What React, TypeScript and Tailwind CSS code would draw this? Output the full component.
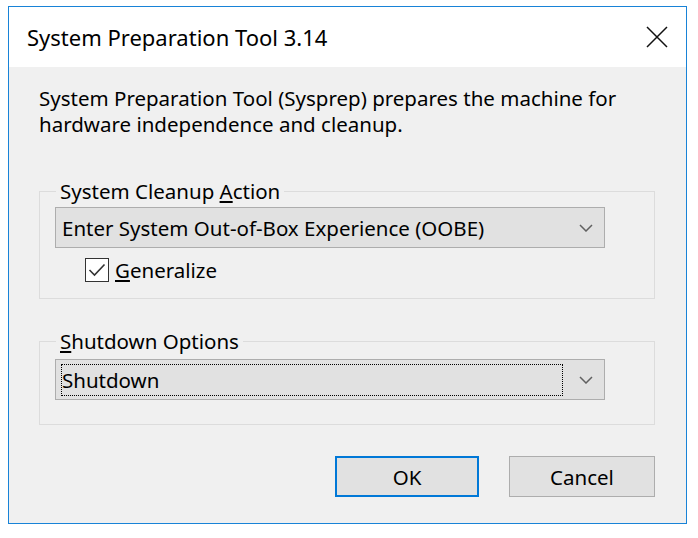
import React from "react";

const font = { fontFamily: '"Noto Sans", "Open Sans", sans-serif' };

const Chevron = () => (
  <svg width="14" height="8" viewBox="0 0 14 8" fill="none">
    <path d="M1 1l6 6 6-6" stroke="#606060" strokeWidth="1.5" />
  </svg>
);

const Combo = ({ children, focused }: { children: React.ReactNode; focused?: boolean }) => (
  <div className="flex h-[41px] w-[550px] items-center border border-[#adadad] bg-[#e1e1e1] pr-[11px]">
    {focused ? (
      <div className="ml-[5px] mr-[16px] flex h-[32px] flex-1 items-center border border-dotted border-black">
        <span>{children}</span>
      </div>
    ) : (
      <span className="ml-[6px] flex-1">{children}</span>
    )}
    <Chevron />
  </div>
);

export default function App() {
  return (
    <div className="h-[538px] w-[698px] bg-white pl-[8px] pt-[6px] text-[20.5px] leading-[26px] text-black" style={font}>
      <div className="flex h-[518px] w-[679px] flex-col border border-[#1883d7]">
        <div className="flex h-[60px] items-center justify-between bg-white pl-[18px] pr-[18px]">
          <span className="text-[22px]">System Preparation Tool 3.14</span>
          <svg width="22" height="22" viewBox="0 0 22 22" fill="none">
            <path d="M1 1l20 20M21 1L1 21" stroke="#111" strokeWidth="1.5" />
          </svg>
        </div>
        <div className="flex flex-1 flex-col bg-[#f0f0f0] pl-[30px] pr-[30px] pt-[18px]">
          <p>
            System Preparation Tool (Sysprep) prepares the machine for
            <br />
            hardware independence and cleanup.
          </p>

          <fieldset className="mt-[42px] w-[616px] border border-[#dcdcdc] pb-[15px] pl-[15px]">
            <legend className="ml-[1px] px-[4px] leading-[24px]">
              System Cleanup <span className="underline">A</span>ction
            </legend>
            <div className="mt-[4px]">
              <Combo>Enter System Out-of-Box Experience (OOBE)</Combo>
            </div>
            <label className="mt-[9px] flex items-center pl-[30px]">
              <span className="flex h-[24px] w-[24px] items-center justify-center border-[1.5px] border-[#333] bg-white">
                <svg width="18" height="14" viewBox="0 0 18 14" fill="none">
                  <path d="M1.5 7l5 5L16.5 1.5" stroke="#333" strokeWidth="1.6" />
                </svg>
              </span>
              <span className="ml-[6px]">
                <span className="underline">G</span>eneralize
              </span>
            </label>
          </fieldset>

          <fieldset className="mt-[30px] w-[616px] border border-[#dcdcdc] pb-[24px] pl-[15px]">
            <legend className="ml-[1px] px-[4px] leading-[24px]">
              <span className="underline">S</span>hutdown Options
            </legend>
            <div className="mt-[6px]">
              <Combo focused>Shutdown</Combo>
            </div>
          </fieldset>

          <div className="mt-[31px] flex justify-end gap-[30px] pr-[1px]">
            <button className="h-[41px] w-[144px] border-2 border-[#0078d7] bg-[#e1e1e1]">OK</button>
            <button className="h-[41px] w-[146px] border border-[#adadad] bg-[#e1e1e1]">Cancel</button>
          </div>
        </div>
      </div>
    </div>
  );
}
